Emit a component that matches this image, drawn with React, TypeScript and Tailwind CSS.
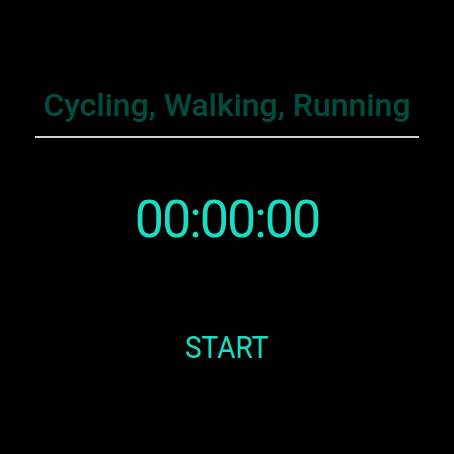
export default function App() {
  return (
    <div className="w-[454px] h-[454px] bg-black flex flex-col items-center" style={{ fontFamily: "Roboto, sans-serif" }}>
      <div className="mt-[86px] text-[32px] font-medium text-[#004d40] leading-[38px]">Cycling, Walking, Running</div>
      <div className="mt-[12px] w-[384px] h-[2px] bg-[#d0d0d0]" />
      <div className="mt-[52px] text-[52px] text-[#19dcc2] leading-[60px] tracking-[-2px]">00:00:00</div>
      <div className="mt-[77px] text-[32px] text-[#19dcc2] leading-[40px] scale-x-[0.876]">START</div>
    </div>
  );
}
